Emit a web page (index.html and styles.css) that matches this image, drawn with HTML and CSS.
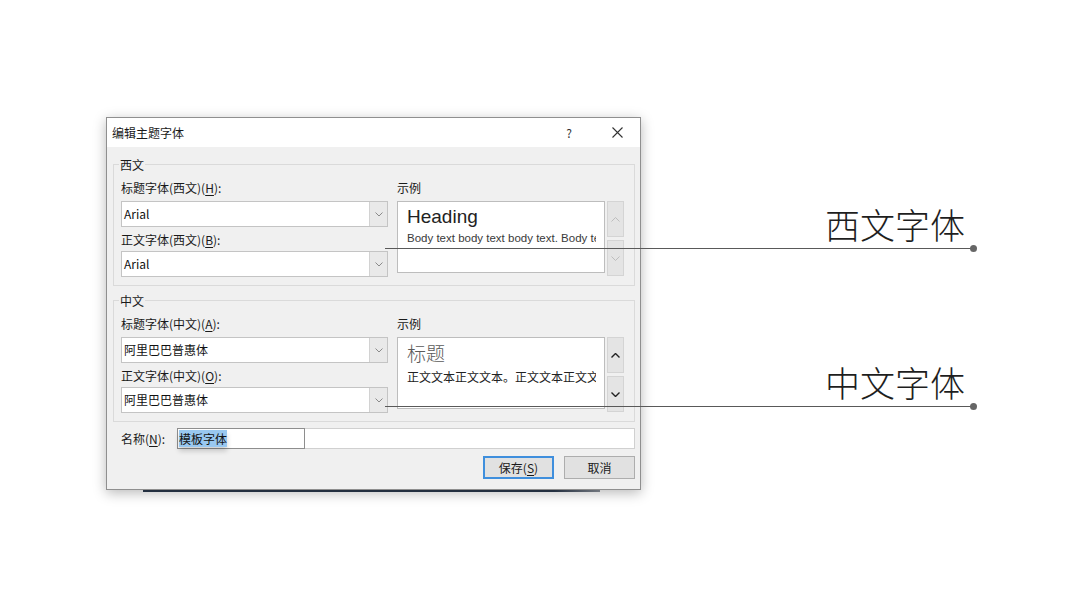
FILE: index.html
```html
<!DOCTYPE html>
<html lang="zh-CN">
<head>
<meta charset="utf-8">
<title>编辑主题字体</title>
<link rel="stylesheet" href="styles.css">
</head>
<body>
<div class="slide">
  <div class="dialog">
    <div class="titlebar">
      <span class="title">编辑主题字体</span>
      <span class="help">?</span>
      <span class="close">
        <svg width="11" height="11" viewBox="0 0 11 11"><path d="M0.5 0.5L10.5 10.5M10.5 0.5L0.5 10.5" stroke="#333" stroke-width="1.1" fill="none"/></svg>
      </span>
    </div>
    <div class="dialog-body">
      <div class="group">
        <div class="legend">西文</div>
        <div class="group-grid">
          <div class="fields">
            <div class="field-label">标题字体(西文)(<u>H</u>):</div>
            <div class="combo">
              <span class="combo-value">Arial</span>
              <span class="combo-btn"><svg width="8" height="5" viewBox="0 0 8 5"><path d="M0.5 0.5L4 4L7.5 0.5" stroke="#8a8a8a" fill="none"/></svg></span>
            </div>
            <div class="field-label second">正文字体(西文)(<u>B</u>):</div>
            <div class="combo">
              <span class="combo-value">Arial</span>
              <span class="combo-btn"><svg width="8" height="5" viewBox="0 0 8 5"><path d="M0.5 0.5L4 4L7.5 0.5" stroke="#8a8a8a" fill="none"/></svg></span>
            </div>
          </div>
          <div class="sample">
            <div class="field-label">示例</div>
            <div class="sample-row">
              <div class="sample-box">
                <div class="sample-heading latin">Heading</div>
                <div class="sample-text latin">Body text body text body text. Body text body text.</div>
              </div>
              <div class="scroll disabled">
                <span class="scroll-btn"><svg width="9" height="5" viewBox="0 0 9 5"><path d="M0.5 4.5L4.5 0.5L8.5 4.5" fill="none"/></svg></span>
                <span class="scroll-btn"><svg width="9" height="5" viewBox="0 0 9 5"><path d="M0.5 0.5L4.5 4.5L8.5 0.5" fill="none"/></svg></span>
              </div>
            </div>
          </div>
        </div>
      </div>

      <div class="group">
        <div class="legend">中文</div>
        <div class="group-grid">
          <div class="fields">
            <div class="field-label">标题字体(中文)(<u>A</u>):</div>
            <div class="combo">
              <span class="combo-value">阿里巴巴普惠体</span>
              <span class="combo-btn"><svg width="8" height="5" viewBox="0 0 8 5"><path d="M0.5 0.5L4 4L7.5 0.5" stroke="#8a8a8a" fill="none"/></svg></span>
            </div>
            <div class="field-label second">正文字体(中文)(<u>O</u>):</div>
            <div class="combo">
              <span class="combo-value">阿里巴巴普惠体</span>
              <span class="combo-btn"><svg width="8" height="5" viewBox="0 0 8 5"><path d="M0.5 0.5L4 4L7.5 0.5" stroke="#8a8a8a" fill="none"/></svg></span>
            </div>
          </div>
          <div class="sample">
            <div class="field-label">示例</div>
            <div class="sample-row">
              <div class="sample-box">
                <div class="sample-heading cjk">标题</div>
                <div class="sample-text cjk">正文文本正文文本。正文文本正文文本。</div>
              </div>
              <div class="scroll">
                <span class="scroll-btn"><svg width="9" height="5" viewBox="0 0 9 5"><path d="M0.5 4.5L4.5 0.5L8.5 4.5" fill="none"/></svg></span>
                <span class="scroll-btn"><svg width="9" height="5" viewBox="0 0 9 5"><path d="M0.5 0.5L4.5 4.5L8.5 0.5" fill="none"/></svg></span>
              </div>
            </div>
          </div>
        </div>
      </div>

      <div class="name-row">
        <span class="name-label">名称(<u>N</u>):</span>
        <div class="name-field">
          <div class="name-editor"><span class="selection">模板字体</span></div>
        </div>
      </div>

      <div class="buttons">
        <button class="btn default">保存(<u>S</u>)</button>
        <button class="btn">取消</button>
      </div>
    </div>
  </div>
  <div class="under-bar"></div>

  <!-- callouts pointing into the dialog -->
  <div class="callout callout-latin"><span class="callout-label">西文字体</span></div>
  <div class="callout callout-cjk"><span class="callout-label">中文字体</span></div>
</div>
</body>
</html>
```
FILE: styles.css
```css
* {
  box-sizing: border-box;
}

html,
body {
  margin: 0;
  padding: 0;
}

body {
  background: #ffffff;
  font-family: "Noto Sans CJK SC", "Noto Sans", sans-serif;
  color: #1a1a1a;
}

.slide {
  position: relative;
  width: 1080px;
  height: 607px;
  overflow: hidden;
  padding: 117px 0 0 106px;
}

/* dialog window */
.dialog {
  position: relative;
  width: 535px;
  background: #f0f0f0;
  border: 1px solid #8f8f8f;
  box-shadow: 0 3px 12px rgba(0, 0, 0, 0.28);
  font-size: 12px;
}

.titlebar {
  display: flex;
  align-items: center;
  height: 29px;
  background: #ffffff;
}

.title {
  flex: 1;
  padding-left: 5px;
  line-height: 16px;
  color: #1a1a1a;
}

.help {
  width: 20px;
  margin-right: 15px;
  text-align: center;
  font-size: 12px;
  color: #333;
}

.close {
  width: 46px;
  display: flex;
  justify-content: center;
}

.dialog-body {
  padding: 17px 5px 10px 6px;
}

/* group boxes */
.group {
  border: 1px solid #dadada;
  padding: 0 10px 8px 7px;
}

.group + .group {
  margin-top: 14px;
}

.legend {
  width: max-content;
  margin: -8px 0 0 -2px;
  padding: 0 1px;
  line-height: 16px;
  background: #f0f0f0;
}

.group-grid {
  display: grid;
  grid-template-columns: 267px 227px;
  column-gap: 9px;
  margin-top: 6px;
}

.field-label {
  line-height: 18px;
  margin-bottom: 4px;
  white-space: nowrap;
}

.field-label.second {
  margin-top: 4px;
  margin-bottom: 2px;
}

u {
  text-decoration-thickness: 1px;
  text-underline-offset: 2px;
}

/* combo boxes */
.combo {
  display: flex;
  height: 26px;
  background: #ffffff;
  border: 1px solid #c4c4c4;
}

.combo-value {
  flex: 1;
  padding-left: 2px;
  line-height: 24px;
  color: #111;
}

.combo-btn {
  width: 18px;
  display: flex;
  align-items: center;
  justify-content: center;
  background: #e9e9e9;
  border-left: 1px solid #d2d2d2;
}

/* sample preview */
.sample-row {
  display: flex;
  gap: 2px;
}

.sample-box {
  width: 208px;
  height: 72px;
  background: #ffffff;
  border: 1px solid #bdbdbd;
  padding: 3px 8px 0 9px;
  overflow: hidden;
  white-space: nowrap;
}

.sample-heading {
  line-height: 24px;
  height: 24px;
  color: #222;
}

.sample-heading.latin {
  font-family: "Liberation Sans", Arial, sans-serif;
  font-size: 19px;
}

.sample-heading.cjk {
  font-size: 19px;
  font-weight: 300;
  color: #5a5a5a;
}

.sample-text {
  margin-top: 2px;
  line-height: 14px;
  font-size: 12px;
  color: #222;
  overflow: hidden;
}

.sample-text.latin {
  font-family: "Liberation Sans", Arial, sans-serif;
  font-size: 11.5px;
  color: #3a3a3a;
}

.sample-text.cjk {
  margin-top: 5px;
}

.scroll {
  display: flex;
  flex-direction: column;
  gap: 3px;
  width: 17px;
}

.scroll-btn {
  height: 36px;
  display: flex;
  align-items: center;
  justify-content: center;
  background: #e4e4e4;
  border: 1px solid #d4d4d4;
}

.scroll-btn path {
  stroke: #222;
  stroke-width: 1.4;
}

.scroll.disabled .scroll-btn path {
  stroke: #bdbdbd;
  stroke-width: 1;
}

/* name row */
.name-row {
  display: flex;
  align-items: center;
  margin-top: 6px;
  padding-left: 8px;
}

.name-label {
  width: 56px;
  line-height: 18px;
}

.name-field {
  flex: 1;
  display: flex;
  height: 21px;
  background: #ffffff;
  border: 1px solid #d0d0d0;
}

.name-editor {
  width: 128px;
  margin: -1px 0 -1px -1px;
  border: 1px solid #8e8e8e;
  background: #ffffff;
  display: flex;
  align-items: center;
  padding-left: 1px;
}

.selection {
  line-height: 17px;
  background: #99c8f0;
  color: #111;
  box-shadow: 0 4px 5px rgba(0, 0, 0, 0.18);
}

/* buttons */
.buttons {
  display: flex;
  justify-content: flex-end;
  gap: 10px;
  margin-top: 7px;
}

.btn {
  width: 71px;
  height: 23px;
  padding: 0;
  font: inherit;
  font-size: 12px;
  color: #1a1a1a;
  background: #e1e1e1;
  border: 1px solid #adadad;
}

.btn.default {
  border: 2px solid #3f8fdd;
}

.under-bar {
  width: 457px;
  height: 2px;
  margin-left: 37px;
  background: linear-gradient(90deg, #2c3a4e 0%, #2c3a4e 90%, #8a9099 100%);
}

/* callout lines with labels */
.callout {
  position: absolute;
  left: 385px;
  width: 588px;
  height: 0;
  border-top: 1.5px solid #595959;
}

.callout::after {
  content: "";
  position: absolute;
  right: -4px;
  top: -4.5px;
  width: 7px;
  height: 7px;
  border-radius: 50%;
  background: #666;
}

.callout-latin {
  top: 248px;
}

.callout-cjk {
  top: 406px;
}

.callout-label {
  position: absolute;
  right: 8px;
  bottom: 8px;
  font-size: 35px;
  line-height: 35px;
  font-weight: 300;
  color: #1e1e1e;
  white-space: nowrap;
}
```
